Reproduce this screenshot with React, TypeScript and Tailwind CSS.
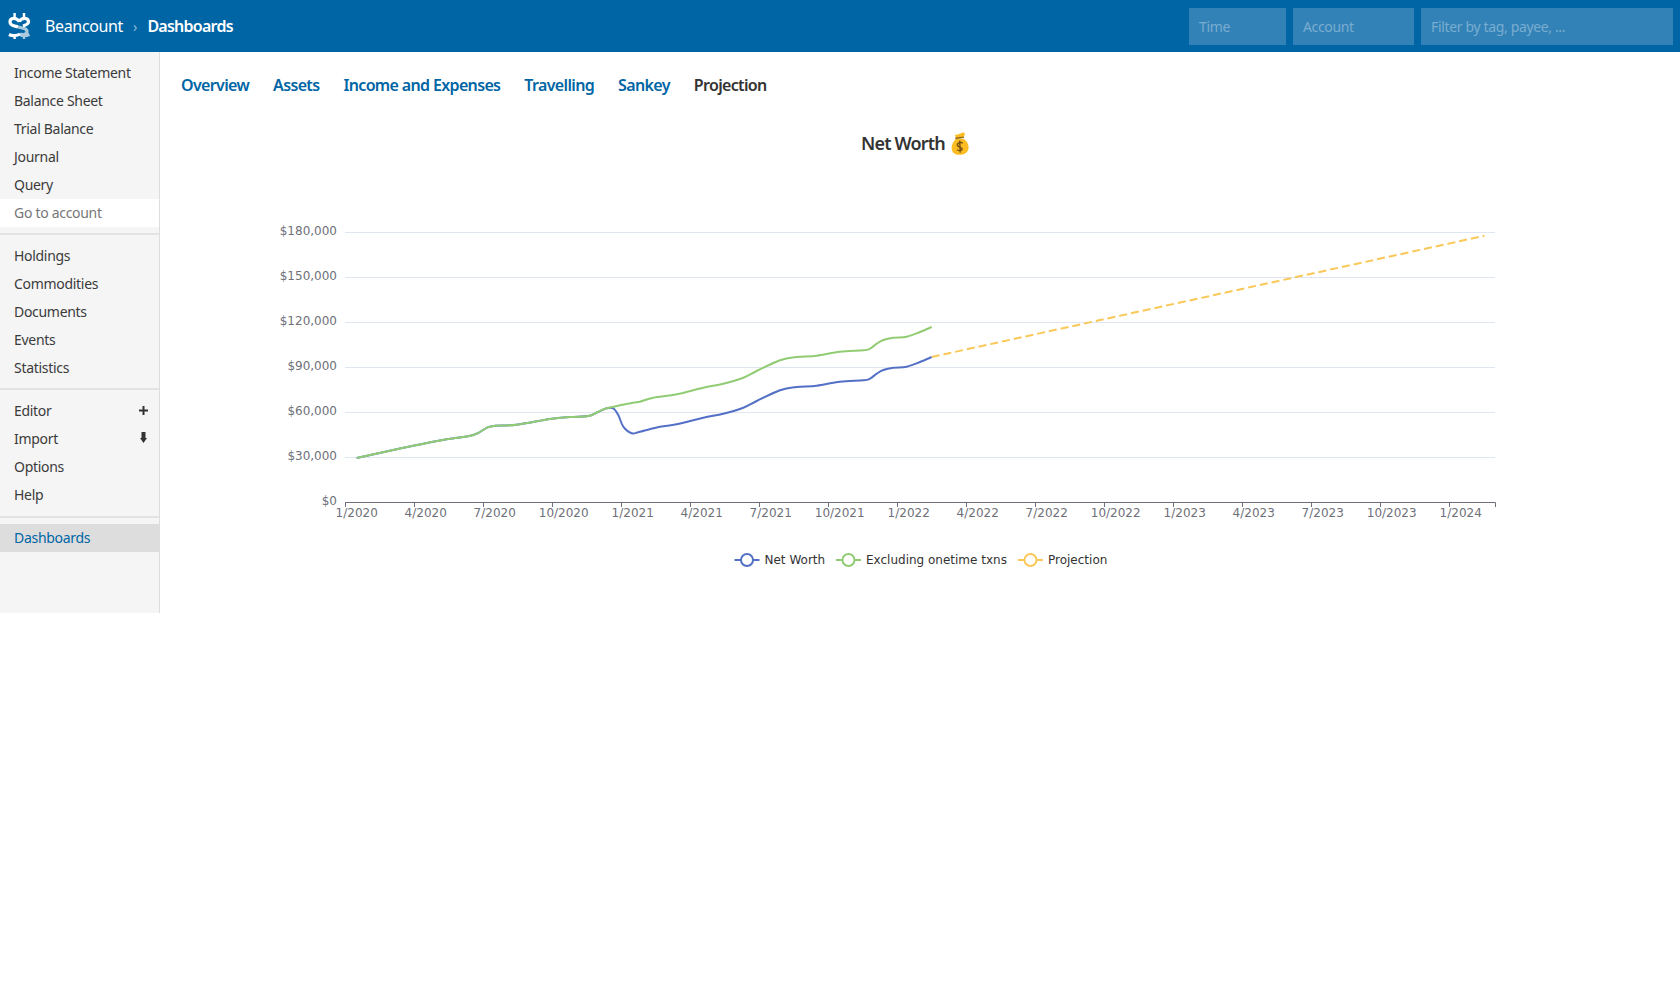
const sidebarGroups = [
  ["Income Statement", "Balance Sheet", "Trial Balance", "Journal", "Query"],
  ["Holdings", "Commodities", "Documents", "Events", "Statistics"],
  ["Editor", "Import", "Options", "Help"],
];

const tabs = ["Overview", "Assets", "Income and Expenses", "Travelling", "Sankey"];

const yTicks = [
  ["$180,000", 232.5],
  ["$150,000", 277.5],
  ["$120,000", 322.5],
  ["$90,000", 367.5],
  ["$60,000", 412.5],
  ["$30,000", 457.5],
] as const;

const xLabels = [
  "1/2020", "4/2020", "7/2020", "10/2020", "1/2021", "4/2021", "7/2021", "10/2021", "1/2022",
  "4/2022", "7/2022", "10/2022", "1/2023", "4/2023", "7/2023", "10/2023", "1/2024",
];

const shared: [number, number][] = [
  [356.7, 458], [400, 448.5], [440, 440.5], [473.3, 435], [486.7, 427.8], [495, 425.7], [516.7, 424.7],
  [550, 419], [570, 417], [588.3, 416], [597, 412.5], [606.7, 408.3],
];
const later: [number, number][] = [
  [640, 401.7], [653.3, 397.7], [676.7, 394.3], [703.3, 387.7], [723.3, 383.7], [743.3, 377.7], [756.7, 371],
  [780, 360.3], [796.7, 357], [816.7, 355.7], [840, 351.7], [863.3, 350.3], [870, 348.7], [876.7, 343.7],
  [883.3, 340], [893.3, 337.7], [906.7, 336.7], [920, 332], [931.7, 327],
];
const green = [...shared, [631.7, 403] as [number, number], ...later];
const blue: [number, number][] = [
  ...shared,
  [613.3, 408.3], [618.3, 415], [623.3, 426.7], [631.7, 433.3], [640, 431.7], [660, 426.7],
  ...later.slice(2).map(([x, y]) => [x, y + 30] as [number, number]),
];

// catmull-rom through the points, close enough to echarts' smooth line
function smooth(p: [number, number][]) {
  let d = `M${p[0][0]} ${p[0][1]}`;
  for (let i = 0; i < p.length - 1; i++) {
    const a = p[Math.max(i - 1, 0)];
    const b = p[i];
    const c = p[i + 1];
    const e = p[Math.min(i + 2, p.length - 1)];
    d += ` C${b[0] + (c[0] - a[0]) / 6} ${b[1] + (c[1] - a[1]) / 6} ${c[0] - (e[0] - b[0]) / 6} ${c[1] - (e[1] - b[1]) / 6} ${c[0]} ${c[1]}`;
  }
  return d;
}

function Logo() {
  return (
    <svg viewBox="0 0 24 26" className="w-[24px] h-[26px] ml-[7px] mr-[14px]" fill="none" strokeWidth="3.2">
      <path d="M7.6 0 V5 M17 0 V5 M7.6 21 V26" stroke="#fff" strokeWidth="2.4" />
      <path d="M17 21 V26" stroke="#a8c8de" strokeWidth="2.4" />
      <path d="M11 14 C16 15 20 15.5 20 18.5 C20 21 16 22.5 13 21 C15 23 19 23 22.5 21.5" stroke="#a8c8de" />
      <path d="M12.3 8.5 C9 4 3 4.5 3 9 C3 13 8 13 11 14 M12.3 8.5 C15 4 21.5 4.5 21.5 9 C21.5 11 19 12 16 13 M2 21.5 C5 23 10 23 13 21" stroke="#fff" />
    </svg>
  );
}

function MoneyBag() {
  return (
    <svg viewBox="0 0 20 22" className="w-[23px] h-[25px] ml-[4px] shrink-0">
      <path d="M6 7 C1 11 0 21 9 21 C19 21 19 11 13 7 Z" fill="#fbbd22" />
      <path d="M6 6 L5 3 C8 4 11 1 13 1 L14 3 L12 6 Z" fill="#fbbd22" />
      <path d="M5.5 6.5 L13 5.5" stroke="#9c6a10" strokeWidth="1.4" />
      <path d="M12 10.5 C9 9.5 6.5 11 7.5 13 C8.5 14.5 11.5 14 11.5 16 C11 18 8.5 17.5 7 16.5 M9.3 8.5 L9.8 19" stroke="#7a5410" strokeWidth="1.3" fill="none" />
    </svg>
  );
}

function LegendItem({ x, label, color }: { x: number; label: string; color: string }) {
  return (
    <g>
      <line x1={x} x2={x + 25} y1="560" y2="560" stroke={color} strokeWidth="2" />
      <circle cx={x + 12.5} cy="560" r="6" fill="#fff" stroke={color} strokeWidth="2" />
      <text x={x + 30} y="564" fill="#333">{label}</text>
    </g>
  );
}

function Chart() {
  return (
    <svg width="1330" height="390" viewBox="181 200 1330 390" className="block mt-[45px]" fontFamily="'DejaVu Sans', sans-serif" fontSize="12">
      {yTicks.map(([label, y]) => (
        <g key={label}>
          <line x1="345" x2="1495" y1={y} y2={y} stroke="#E0E6F1" />
          <text x="337" y={y + 2.5} textAnchor="end" fill="#6E7079">{label}</text>
        </g>
      ))}
      <text x="337" y="505" textAnchor="end" fill="#6E7079">$0</text>
      <line x1="345" x2="1495.5" y1="502.5" y2="502.5" stroke="#6E7079" />
      {xLabels.map((label, i) => (
        <g key={label}>
          <line x1={345.5 + i * 69} x2={345.5 + i * 69} y1="502.5" y2="507" stroke="#6E7079" />
          <text x={356.7 + i * 69} y="517" textAnchor="middle" fill="#6E7079">{label}</text>
        </g>
      ))}
      <line x1="1495.5" x2="1495.5" y1="502.5" y2="507" stroke="#6E7079" />
      <path d={smooth(blue)} fill="none" stroke="#5470c6" strokeWidth="2" />
      <path d={smooth(green)} fill="none" stroke="#91cc75" strokeWidth="2" />
      <line x1="931.7" y1="357" x2="1484.5" y2="235.75" stroke="#fac858" strokeWidth="2" strokeDasharray="8 4" />
      <LegendItem x={734.5} label="Net Worth" color="#5470c6" />
      <LegendItem x={836} label="Excluding onetime txns" color="#91cc75" />
      <LegendItem x={1018} label="Projection" color="#fac858" />
    </svg>
  );
}

export default function App() {
  return (
    <div className="min-h-[1000px] bg-white font-['Noto_Sans',sans-serif] text-[#333]">
      <header className="h-[52px] bg-[#0065a5] flex items-center text-white">
        <Logo />
        <span className="text-[16px] tracking-[-0.35px]">Beancount</span>
        <span className="mx-[10px] text-[14px] text-[#8fbcd8]">›</span>
        <span className="text-[16px] font-semibold tracking-[-0.75px]">Dashboards</span>
        <div className="ml-auto flex gap-[7px] pr-[7px] text-[14px] tracking-[-0.35px] text-[#78add0]">
          <div className="w-[97px] h-[37px] bg-[#3382b7] pl-[10px] flex items-center">Time</div>
          <div className="w-[121px] h-[37px] bg-[#3382b7] pl-[10px] flex items-center">Account</div>
          <div className="w-[252px] h-[37px] bg-[#3382b7] pl-[10px] flex items-center">Filter by tag, payee, ...</div>
        </div>
      </header>
      <div className="flex items-start">
        <aside className="w-[160px] h-[561px] shrink-0 bg-[#f5f5f5] border-r border-[#ddd] text-[14px] tracking-[-0.3px] text-[#3b3b3b]">
          <ul className="pt-[7px]">
            {sidebarGroups[0].map((item) => (
              <li key={item} className="h-[28px] leading-[28px] pl-[14px]">{item}</li>
            ))}
            <li className="h-[28px] leading-[28px] pl-[14px] bg-white text-[#777]">Go to account</li>
          </ul>
          <ul className="mt-[6px] pt-[7px] pb-[6px] border-t-2 border-[#e3e3e3]">
            {sidebarGroups[1].map((item) => (
              <li key={item} className="h-[28px] leading-[28px] pl-[14px]">{item}</li>
            ))}
          </ul>
          <ul className="pt-[6px] pb-[8px] border-t-2 border-[#e3e3e3]">
            {sidebarGroups[2].map((item) => (
              <li key={item} className="h-[28px] pl-[14px] pr-[11px] flex items-center justify-between">
                {item}
                {item === "Editor" && (
                  <svg viewBox="0 0 9 9" className="w-[9px] h-[9px]" fill="#333">
                    <path d="M3.5 0 H5.5 V3.5 H9 V5.5 H5.5 V9 H3.5 V5.5 H0 V3.5 H3.5 Z" />
                  </svg>
                )}
                {item === "Import" && (
                  <svg viewBox="0 0 7 11" className="w-[7px] h-[11px] mr-[1px] mb-[1px]" fill="#333">
                    <path d="M1.5 0 H5.5 V6 H7 L3.5 11 L0 6 H1.5 Z" />
                  </svg>
                )}
              </li>
            ))}
          </ul>
          <ul className="pt-[6px] border-t-2 border-[#e3e3e3]">
            <li className="h-[28px] leading-[28px] pl-[14px] bg-[#ddd] text-[#0065a5]">Dashboards</li>
          </ul>
        </aside>
        <main className="flex-1 pl-[21px] pr-[30px]">
          <nav className="flex gap-[24px] pt-[21px] text-[16px] font-semibold tracking-[-0.65px] text-[#0065a5] leading-[24px]">
            {tabs.map((t) => (
              <span key={t}>{t}</span>
            ))}
            <span className="text-[#333]">Projection</span>
          </nav>
          <h3 className="mt-[34px] h-[24px] flex items-center justify-center text-[18px] font-semibold tracking-[-0.8px] pl-[2px]">
            Net Worth
            <MoneyBag />
          </h3>
          <Chart />
        </main>
      </div>
    </div>
  );
}
